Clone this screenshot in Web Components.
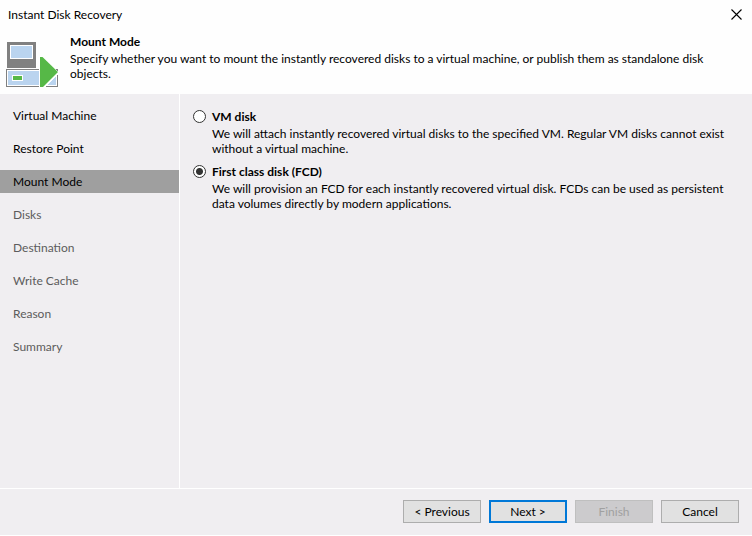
<!DOCTYPE html>
<html lang="en">
<head>
<meta charset="utf-8">
<title>Instant Disk Recovery</title>
<style>
    html, body {
        height: 100%;
        margin: 0;
    }

    body {
        --panel: #f0eef1;
        --accent: #0078d7;
        background: #fff;
        color: #000;
        font: 12px/15px Lato, "Open Sans", sans-serif;
    }
</style>
</head>
<body>
<recovery-wizard></recovery-wizard>

<script>
class WizardHeader extends HTMLElement {
    constructor() {
        super();
        this.attachShadow({ mode: "open" });
    }

    connectedCallback() {
        this.shadowRoot.innerHTML = `
            <style>
                :host {
                    display: block;
                    background: #fefefe;
                }

                .title-bar {
                    display: flex;
                    align-items: center;
                    justify-content: space-between;
                    height: 29px;
                    padding: 0 8px;
                }

                .title-bar button {
                    display: flex;
                    padding: 2px;
                    border: none;
                    background: none;
                }

                .intro {
                    display: flex;
                    gap: 12px;
                    min-height: 65px;
                    box-sizing: border-box;
                    padding: 5px 32px 4px 6px;
                }

                .intro svg {
                    flex: none;
                    margin-top: 8px;
                }

                h1, p {
                    margin: 0;
                    font-size: 12px;
                }

                p {
                    margin-top: 2px;
                }
            </style>

            <div class="title-bar">
                <span><slot name="window"></slot></span>
                <button type="button" aria-label="Close">
                    <svg width="11" height="11" viewBox="0 0 11 11">
                        <path d="M.5 .5l10 10M10.5 .5l-10 10" stroke="#000" stroke-width="1.1"/>
                    </svg>
                </button>
            </div>
            <div class="intro">
                <svg width="52" height="46" viewBox="0 0 52 46" shape-rendering="crispEdges">
                    <path fill="#808080" d="M1 0h29v26H1zM0 27h52v18H0z"/>
                    <path fill="#fff" d="M4 3h23v14H4zM1 28h50v16H1z"/>
                    <path fill="#bad4ef" d="M5 4h21v12H5zM2 29h48v14H2z"/>
                    <path fill="#fff" d="M6 33h11v6H6z"/>
                    <path fill="#56b847" d="M7 34h9v4H7z"/>
                    <path fill="#fff" d="M33 14h3l16 15v3L39 45h-6z"/>
                    <path fill="#56b847" shape-rendering="auto" d="M34 15h2.500l15.500 15L37 45h-3z"/>
                </svg>
                <div>
                    <h1><slot name="heading"></slot></h1>
                    <p><slot></slot></p>
                </div>
            </div>
        `;
    }
}

class WizardSteps extends HTMLElement {
    constructor() {
        super();
        this.attachShadow({ mode: "open" });
        this.steps = ["Virtual Machine", "Restore Point", "Mount Mode", "Disks",
            "Destination", "Write Cache", "Reason", "Summary"];
        this.current = 2;
    }

    connectedCallback() {
        this.shadowRoot.innerHTML = `
            <style>
                :host {
                    display: block;
                    border-right: 1px solid #fff;
                }

                ol {
                    display: flex;
                    flex-direction: column;
                    gap: 10px;
                    margin: 0;
                    padding: 10px 0;
                    list-style: none;
                }

                li {
                    padding: 4px 13px;
                }

                li.current {
                    background: #9f9f9f;
                }

                li.pending {
                    color: #5c5c5c;
                }
            </style>

            <ol>${this.steps.map((step, i) => this.renderStep(step, i)).join("")}</ol>
        `;
    }

    renderStep(step, i) {
        if (i === this.current) {
            return `<li class="current" aria-current="step">${step}</li>`;
        }
        return `<li class="${i > this.current ? "pending" : "done"}">${step}</li>`;
    }
}

// Both radios live in one shadow root, so that they form a single group.
class MountOptions extends HTMLElement {
    constructor() {
        super();
        this.attachShadow({ mode: "open" });
        this.options = [
            {
                id: "vm",
                label: "VM disk",
                text: "We will attach instantly recovered virtual disks to the specified VM. Regular VM disks cannot exist without a virtual machine."
            },
            {
                id: "fcd",
                label: "First class disk (FCD)",
                text: "We will provision an FCD for each instantly recovered virtual disk. FCDs can be used as persistent data volumes directly by modern applications.",
                checked: true
            }
        ];
    }

    connectedCallback() {
        this.shadowRoot.innerHTML = `
            <style>
                :host {
                    display: flex;
                    flex-direction: column;
                    gap: 8px;
                    padding: 15px 20px 15px 13px;
                }

                .option {
                    display: grid;
                    grid-template-columns: 13px 1fr;
                    gap: 2px 6px;
                }

                input {
                    appearance: none;
                    width: 13px;
                    height: 13px;
                    margin: 1px 0;
                    border: 1px solid #333;
                    border-radius: 50%;
                    background: #fff;
                }

                input:checked {
                    background: radial-gradient(circle, #333 3px, #fff 4px);
                }

                label {
                    font-weight: bold;
                }

                p {
                    grid-column: 2;
                    margin: 0;
                }
            </style>

            ${this.options.map(o => `
                <div class="option">
                    <input type="radio" name="mode" id="${o.id}" aria-describedby="${o.id}-text" ${o.checked ? "checked" : ""}>
                    <label for="${o.id}">${o.label}</label>
                    <p id="${o.id}-text">${o.text}</p>
                </div>
            `).join("")}
        `;
    }
}

class WizardButton extends HTMLElement {
    constructor() {
        super();
        this.attachShadow({ mode: "open" });
    }

    connectedCallback() {
        this.shadowRoot.innerHTML = `
            <style>
                :host {
                    display: block;
                }

                button {
                    display: block;
                    min-width: 78px;
                    height: 23px;
                    padding: 0 8px;
                    border: 1px solid #adadad;
                    background: #e1e1e1;
                    color: inherit;
                    font: inherit;
                }

                :host([primary]) button {
                    border: 2px solid var(--accent);
                }

                button:disabled {
                    border-color: #bfbfbf;
                    background: #cccbcd;
                    color: #a0a0a0;
                }
            </style>

            <button type="button" ${this.hasAttribute("disabled") ? "disabled" : ""}><slot></slot></button>
        `;
    }
}

class RecoveryWizard extends HTMLElement {
    constructor() {
        super();
        this.attachShadow({ mode: "open" });
    }

    connectedCallback() {
        this.shadowRoot.innerHTML = `
            <style>
                :host {
                    display: flex;
                    flex-direction: column;
                    min-height: 100%;
                    box-sizing: border-box;
                    border-bottom: 1px solid #fff;
                    background: var(--panel);
                }

                main {
                    display: grid;
                    grid-template-columns: 180px 1fr;
                    flex: 1;
                }

                footer {
                    display: flex;
                    justify-content: flex-end;
                    gap: 8px;
                    padding: 11px 13px 12px;
                    border-top: 1px solid #fff;
                }
            </style>

            <wizard-header>
                <span slot="window">Instant Disk Recovery</span>
                <span slot="heading">Mount Mode</span>
                Specify whether you want to mount the instantly recovered disks to a virtual machine, or publish them as standalone disk objects.
            </wizard-header>
            <main>
                <wizard-steps></wizard-steps>
                <mount-options></mount-options>
            </main>
            <footer>
                <wizard-button>&lt; Previous</wizard-button>
                <wizard-button primary>Next &gt;</wizard-button>
                <wizard-button disabled>Finish</wizard-button>
                <wizard-button>Cancel</wizard-button>
            </footer>
        `;
    }
}

customElements.define("wizard-header", WizardHeader);
customElements.define("wizard-steps", WizardSteps);
customElements.define("mount-options", MountOptions);
customElements.define("wizard-button", WizardButton);
customElements.define("recovery-wizard", RecoveryWizard);
</script>
</body>
</html>
